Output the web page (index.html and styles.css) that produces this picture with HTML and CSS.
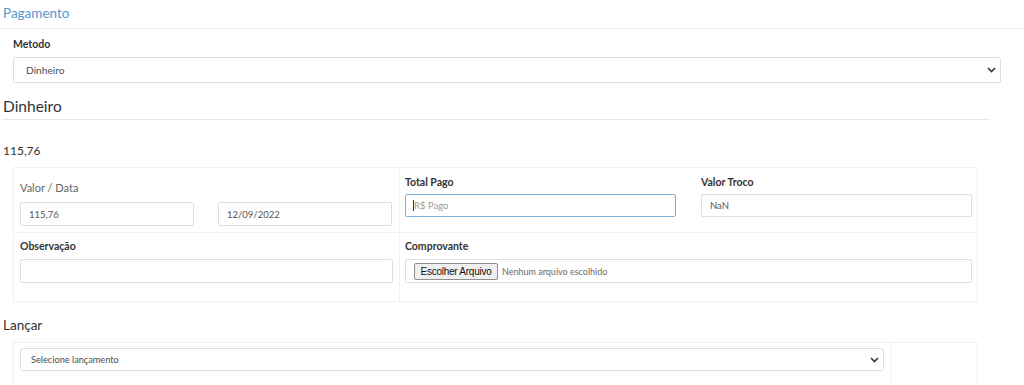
FILE: index.html
```html
<!DOCTYPE html>
<html lang="pt-BR">
<head>
  <meta charset="UTF-8">
  <meta name="viewport" content="width=device-width, initial-scale=1.0">
  <title>Pagamento</title>
  <link rel="stylesheet" href="styles.css">
</head>
<body>

  <!-- Cabeçalho da seção -->
  <h4 class="section-title">Pagamento</h4>

  <!-- Método de pagamento -->
  <div class="metodo">
    <label class="field-label">Metodo</label>
    <div class="select-wrap">
      <select class="form-select">
        <option>Dinheiro</option>
      </select>
      <svg class="chevron" width="9" height="6" viewBox="0 0 9 6"><path d="M1 1 L4.5 4.5 L8 1" fill="none" stroke="#343a40" stroke-width="1.7"/></svg>
    </div>
  </div>

  <h3 class="sub-title">Dinheiro</h3>
  <div class="valor-total">115,76</div>

  <!-- Dados do pagamento -->
  <div class="pay-card">
    <div class="cell cell-valor">
      <div class="plain-label">Valor / Data</div>
      <div class="pair">
        <input class="form-input" type="text" value="115,76">
        <input class="form-input" type="text" value="12/09/2022">
      </div>
    </div>
    <div class="cell cell-totais">
      <div class="field">
        <label class="field-label">Total Pago</label>
        <div class="input-focus">
          <input class="form-input is-focused" type="text" placeholder="R$ Pago">
          <span class="caret"></span>
        </div>
      </div>
      <div class="field">
        <label class="field-label">Valor Troco</label>
        <input class="form-input" type="text" value="NaN" readonly>
      </div>
    </div>
    <div class="cell cell-obs">
      <label class="field-label">Observação</label>
      <input class="form-input tall" type="text">
    </div>
    <div class="cell cell-comp">
      <label class="field-label">Comprovante</label>
      <div class="file-box">
        <button class="file-btn">Escolher Arquivo</button>
        <span class="file-name">Nenhum arquivo escolhido</span>
      </div>
    </div>
  </div>

  <h4 class="lancar-title">Lançar</h4>

  <!-- Lançamento -->
  <div class="lanc-card">
    <div class="cell cell-lanc">
      <div class="select-wrap">
        <select class="form-select small">
          <option>Selecione lançamento</option>
        </select>
        <svg class="chevron" width="9" height="6" viewBox="0 0 9 6"><path d="M1 1 L4.5 4.5 L8 1" fill="none" stroke="#343a40" stroke-width="1.7"/></svg>
      </div>
    </div>
    <div class="cell cell-empty"></div>
  </div>

</body>
</html>
```

FILE: styles.css
```css
* {
  margin: 0;
  padding: 0;
  box-sizing: border-box;
}

body {
  font-family: Lato, "Noto Sans", sans-serif;
  color: #333;
  background: #fff;
  overflow: hidden;
}

/* Cabeçalhos */
.section-title {
  font-size: 13.5px;
  font-weight: 400;
  line-height: 20px;
  color: #5a96cc;
  padding: 3px 3px 5px;
  border-bottom: 1px solid #eef0f3;
}

.sub-title {
  font-size: 15.5px;
  font-weight: 400;
  line-height: 22px;
  color: #333;
  width: 988px;
  margin: 12px 0 0 2px;
  padding: 0 1px 2px;
  border-bottom: 1px solid #e5e7eb;
}

.valor-total {
  font-size: 12px;
  line-height: 16px;
  padding: 23px 3px 0;
  color: #333;
}

.lancar-title {
  font-size: 13.5px;
  font-weight: 400;
  line-height: 18px;
  color: #333;
  padding: 14px 3px 0;
}

/* Método */
.metodo {
  padding: 7px 23px 0 13px;
}

.field-label {
  display: block;
  font-size: 10.5px;
  font-weight: 700;
  line-height: 16px;
  color: #333;
  margin-bottom: 5px;
}

.select-wrap {
  position: relative;
}

.form-select {
  appearance: none;
  -webkit-appearance: none;
  display: block;
  width: 100%;
  height: 26px;
  padding: 0 12px;
  font-family: inherit;
  font-size: 10.2px;
  color: #495057;
  background: #fff;
  border: 1px solid #dcdde6;
  border-radius: 2px;
  outline: none;
}

.form-select.small {
  height: 23px;
  padding: 0 10px;
  font-size: 9.2px;
  border-radius: 3px;
}

.chevron {
  position: absolute;
  right: 5px;
  top: 10px;
}

.cell-lanc .chevron {
  right: 5px;
  top: 9px;
}

/* Cartão de pagamento */
.pay-card {
  display: grid;
  grid-template-columns: 386px 579px;
  grid-template-rows: 65px 68px;
  width: 965px;
  margin: 8px 0 0 13px;
  border: 1px solid #f1f1f3;
}

.cell {
  border-color: #f1f1f3;
  border-style: solid;
  border-width: 0;
}

.cell-valor {
  padding: 12px 6px 0 6px;
  border-right-width: 1px;
  border-bottom-width: 1px;
}

.plain-label {
  font-size: 11px;
  line-height: 15px;
  color: #666;
  margin-bottom: 7px;
}

.pair {
  display: flex;
  gap: 24px;
}

.pair .form-input {
  width: 174px;
  height: 24px;
}

.cell-totais {
  display: flex;
  gap: 25px;
  padding: 7px 7px 0 5px;
  border-bottom-width: 1px;
}

.cell-totais .field-label {
  line-height: 14px;
}

.field {
  flex: 1;
}

.cell-obs {
  padding: 6px 6px 0 6px;
  border-right-width: 1px;
}

.cell-comp {
  padding: 6px 7px 0 5px;
}

.cell-obs .field-label,
.cell-comp .field-label {
  line-height: 14px;
  margin-bottom: 6px;
}

.form-input {
  display: block;
  width: 100%;
  height: 23px;
  padding: 0 8px;
  font-family: inherit;
  font-size: 9.5px;
  color: #555;
  background: #fff;
  border: 1px solid #dcdde6;
  border-radius: 2px;
  outline: none;
}

.form-input.tall {
  height: 24px;
}

.form-input::placeholder {
  color: #9a9a9a;
}

.form-input.is-focused {
  border-color: #7fb0dd;
}

.input-focus {
  position: relative;
}

.caret {
  position: absolute;
  left: 8px;
  top: 6px;
  width: 1px;
  height: 11px;
  background: #333;
}

.file-box {
  display: flex;
  align-items: center;
  gap: 4px;
  height: 24px;
  padding: 0 8px;
  border: 1px solid #dcdde6;
  border-radius: 2px;
}

.file-btn {
  font-family: "Liberation Sans", Arial, sans-serif;
  font-size: 10px;
  letter-spacing: -0.25px;
  white-space: nowrap;
  color: #111;
  height: 17px;
  width: 84px;
  background: #efefef;
  border: 1px solid #8f8f8f;
  border-radius: 2px;
}

.file-name {
  font-size: 9px;
  color: #6b6b6b;
}

/* Cartão de lançamento */
.lanc-card {
  display: grid;
  grid-template-columns: 878px 87px;
  width: 965px;
  height: 60px;
  margin: 8px 0 0 13px;
  border: 1px solid #f1f1f3;
}

.cell-lanc {
  padding: 5px 7px 0 6px;
  border-right-width: 1px;
}
```
